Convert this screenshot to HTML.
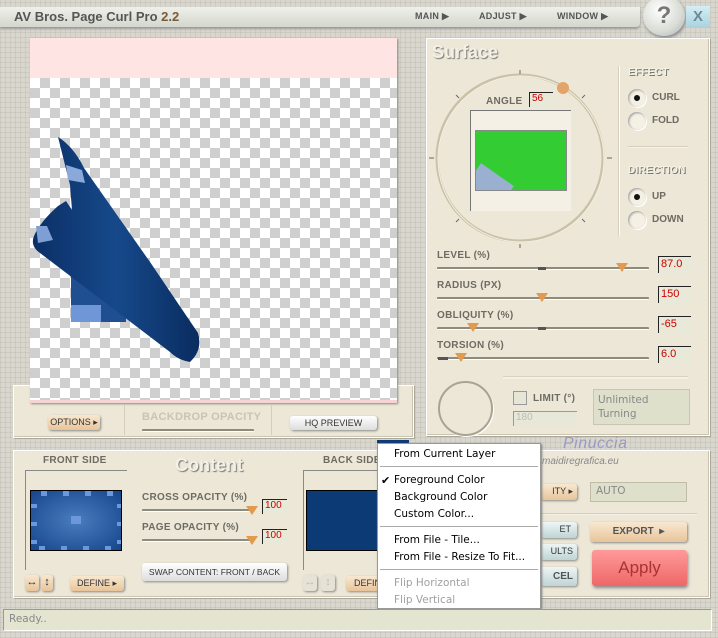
<!DOCTYPE html>
<html><head><style>
*{margin:0;padding:0;box-sizing:border-box}
body{width:718px;height:638px;position:relative;overflow:hidden;font-family:"Liberation Sans",sans-serif;
background-color:#d9d6cd;
background-image:repeating-linear-gradient(0deg,rgba(0,0,0,.05) 0 1px,transparent 1px 5px),repeating-linear-gradient(90deg,rgba(0,0,0,.05) 0 1px,transparent 1px 5px);}
.a{position:absolute}
.panel{position:absolute;background:#ece7d7;border:1px solid #fff;box-shadow:1px 1px 0 #aaa69a,inset -1px -1px 0 #c9c3b0}
.lbl{position:absolute;font-size:10px;font-weight:bold;color:#6d6b62;letter-spacing:.3px;white-space:nowrap}
.val{position:absolute;width:33px;height:17px;background:#e8e9d8;border-top:1px solid #222;border-left:1px solid #222;color:#c00;font-size:11px;padding:1px 2px}
.track{position:absolute;height:3px;background:#8d8a7e;border-bottom:1px solid #fff;border-radius:1px}
.thumb{position:absolute;width:0;height:0;border-left:6px solid transparent;border-right:6px solid transparent;border-top:9px solid #e39a4c}
.btn{position:absolute;font-size:9px;color:#333;text-align:center;border-radius:3px;box-shadow:1px 1px 2px #888;line-height:15px;white-space:nowrap}
.or{background:linear-gradient(#f8e8d0,#e8c49a)}
.wh{background:linear-gradient(#fff,#ddd)}
.bl{background:linear-gradient(#eef5f5,#bfd4d6)}
.radio{position:absolute;width:18px;height:18px;border-radius:50%;background:#f4f0e4;box-shadow:inset 1px 1px 2px #999,1px 1px 0 #fff}
.radio.on::after{content:"";position:absolute;left:6px;top:6px;width:6px;height:6px;border-radius:50%;background:#111}
.rt{position:absolute;font-size:10px;font-weight:bold;color:#6d6b62}
.mi{position:absolute;left:394px;font-family:"DejaVu Sans",sans-serif;font-size:10.5px;color:#000;white-space:nowrap}
.sep{position:absolute;left:380px;width:158px;height:2px;border-top:1px solid #aaa;border-bottom:1px solid #fff}
</style></head><body>

<div class="a" style="left:0;top:7px;width:640px;height:20px;background:linear-gradient(#eef0ea,#d4d7cd);border-radius:0 0 4px 0;box-shadow:0 2px 2px #999"></div>
<div class="a" style="left:14px;top:9px;font-size:13px;font-weight:bold;color:#555">AV Bros. Page Curl Pro <span style="color:#7a5a38">2.2</span></div>
<div class="a" style="left:415px;top:11px;font-size:9px;font-weight:bold;color:#555;letter-spacing:.3px">MAIN ▶</div>
<div class="a" style="left:479px;top:11px;font-size:9px;font-weight:bold;color:#555;letter-spacing:.3px">ADJUST ▶</div>
<div class="a" style="left:557px;top:11px;font-size:9px;font-weight:bold;color:#555;letter-spacing:.3px">WINDOW ▶</div>
<div class="a" style="left:643px;top:-4px;width:42px;height:40px;border-radius:50%;background:radial-gradient(circle at 40% 35%,#fff,#d8dcd4 60%,#aab);box-shadow:1px 2px 3px #888;text-align:center;font-size:24px;font-weight:bold;color:#777;line-height:40px">?</div>
<div class="a" style="left:686px;top:6px;width:24px;height:22px;background:linear-gradient(#d4eef4,#a9d2de);text-align:center;font-size:15px;font-weight:bold;color:#6a8a98;line-height:22px">X</div>

<div class="panel" style="left:13px;top:385px;width:401px;height:53px"></div>
<div class="a" style="left:30px;top:38px;width:367px;height:365px;border-bottom:3px solid #f6d4d4;
background-color:#fff;background-image:linear-gradient(45deg,#cfcfcf 25%,transparent 25%,transparent 75%,#cfcfcf 75%),linear-gradient(45deg,#cfcfcf 25%,transparent 25%,transparent 75%,#cfcfcf 75%);background-size:20px 20px;background-position:0 0,10px 10px;box-shadow:1px 1px 2px #888"></div>
<div class="a" style="left:30px;top:38px;width:367px;height:40px;background:#ffe4e4"></div>
<svg class="a" style="left:0;top:0" width="420" height="400">
<defs><linearGradient id="g" x1="0" y1="0" x2="1" y2="0"><stop offset="0" stop-color="#0b2f66"/><stop offset=".5" stop-color="#16498a"/><stop offset="1" stop-color="#0a2c60"/></linearGradient></defs>
<rect x="71" y="275" width="55" height="47" fill="#1f4f91"/>
<rect x="71" y="305" width="30" height="17" fill="#6f96d6"/>
<path d="M58,137 C68,143 78,155 84,168 L150,262 L198,333 Q203,350 190,362 Q178,360 170,352 L40,253 Q30,246 34,236 Q40,222 58,206 L66,201 L72,210 L70,185 Z" fill="url(#g)"/>
<path d="M66,165 L82,170 L85,183 L68,180 Z" fill="#8aa8d8"/>
<path d="M36,226 L47,226 L53,240 L38,243 Z" fill="#7e9fd4"/>
</svg>
<div class="btn or" style="left:48px;top:415px;width:52px;height:15px">OPTIONS ▸</div>
<div class="a" style="left:124px;top:405px;width:1px;height:30px;background:#d4ceba"></div>
<div class="lbl" style="left:142px;top:411px;color:#c9c4b4;font-size:11px">BACKDROP OPACITY</div>
<div class="track" style="left:142px;top:429px;width:112px"></div>
<div class="a" style="left:271px;top:405px;width:1px;height:30px;background:#d4ceba"></div>
<div class="btn wh" style="left:290px;top:416px;width:87px;height:14px;line-height:14px">HQ PREVIEW</div>

<div class="panel" style="left:426px;top:38px;width:284px;height:398px"></div>
<div class="a" style="left:432px;top:42px;font-size:18px;font-weight:bold;color:#f4f0e4;text-shadow:1px 1px 1px #777">Surface</div>
<svg class="a" style="left:426px;top:68px" width="200" height="184">
<circle cx="94" cy="90" r="83" fill="none" stroke="#c9c2a8" stroke-width="3"/>
<circle cx="95" cy="91" r="83" fill="none" stroke="#f4f0e2" stroke-width="1"/>
<g stroke="#666" stroke-width="1"><line x1="94" y1="2" x2="94" y2="6"/><line x1="3" y1="90" x2="8" y2="90"/><line x1="181" y1="90" x2="186" y2="90"/><line x1="30" y1="27" x2="33" y2="30"/><line x1="156" y1="30" x2="159" y2="27"/><line x1="30" y1="154" x2="33" y2="151"/><line x1="156" y1="151" x2="159" y2="154"/><line x1="94" y1="176" x2="94" y2="180"/></g>
<circle cx="137" cy="20" r="6" fill="#e2a468"/>
</svg>
<div class="lbl" style="left:486px;top:96px;font-size:10px">ANGLE</div>
<div class="val" style="left:529px;top:92px;width:24px;height:15px;font-size:10px;padding:0 2px">56</div>
<div class="a" style="left:470px;top:110px;width:101px;height:101px;background:#f4f0e6;border-left:1px solid #777;border-top:1px solid #777"></div>
<div class="a" style="left:475px;top:130px;width:92px;height:61px;background:#33cc33;border:1px solid #888;overflow:hidden"><div class="a" style="left:-10px;top:40px;width:40px;height:40px;background:#9ab0d0;transform:rotate(35deg)"></div></div>
<div class="a" style="left:618px;top:66px;width:1px;height:170px;background:#d4ceba;box-shadow:1px 0 #fff"></div>
<div class="lbl" style="left:628px;top:67px;color:#f6f2e0;text-shadow:1px 1px 0 #777">EFFECT</div>
<div class="radio on" style="left:628px;top:89px"></div><div class="rt" style="left:652px;top:92px">CURL</div>
<div class="radio" style="left:628px;top:112px"></div><div class="rt" style="left:652px;top:115px">FOLD</div>
<div class="a" style="left:628px;top:146px;width:60px;height:2px;background:#f6f2e4;border-top:1px solid #d4ceba"></div>
<div class="lbl" style="left:628px;top:165px;color:#f6f2e0;text-shadow:1px 1px 0 #777">DIRECTION</div>
<div class="radio on" style="left:628px;top:188px"></div><div class="rt" style="left:652px;top:191px">UP</div>
<div class="radio" style="left:628px;top:211px"></div><div class="rt" style="left:652px;top:214px">DOWN</div>

<div class="lbl" style="left:437px;top:250px">LEVEL (%)</div>
<div class="track" style="left:437px;top:267px;width:212px"></div><div class="a" style="left:538px;top:267px;width:8px;height:3px;background:#555"></div><div class="thumb" style="left:616px;top:263px"></div>
<div class="val" style="left:658px;top:256px">87.0</div>
<div class="lbl" style="left:437px;top:280px">RADIUS (PX)</div>
<div class="track" style="left:437px;top:297px;width:212px"></div><div class="thumb" style="left:536px;top:293px"></div>
<div class="val" style="left:658px;top:286px">150</div>
<div class="lbl" style="left:437px;top:310px">OBLIQUITY (%)</div>
<div class="track" style="left:437px;top:327px;width:212px"></div><div class="a" style="left:538px;top:327px;width:8px;height:3px;background:#555"></div><div class="thumb" style="left:467px;top:323px"></div>
<div class="val" style="left:658px;top:316px">-65</div>
<div class="lbl" style="left:437px;top:340px">TORSION (%)</div>
<div class="track" style="left:437px;top:357px;width:212px"></div><div class="a" style="left:438px;top:357px;width:10px;height:3px;background:#555"></div><div class="thumb" style="left:455px;top:353px"></div>
<div class="val" style="left:658px;top:346px">6.0</div>
<div class="a" style="left:503px;top:376px;width:185px;height:3px;background:#f4f0e4;border-top:1px solid #d8d2be"></div>
<div class="a" style="left:438px;top:381px;width:55px;height:55px;border-radius:50%;border:2px solid #a9a392;box-shadow:1px 1px 0 #fff"></div>
<div class="a" style="left:513px;top:391px;width:14px;height:14px;border:1px solid #999;background:#e6e6d6"></div>
<div class="lbl" style="left:533px;top:393px">LIMIT (°)</div>
<div class="a" style="left:513px;top:411px;width:64px;height:15px;border-top:1px solid #999;border-left:1px solid #999;background:#e8e8d8;font-size:10px;color:#bbb;padding-left:2px">180</div>
<div class="a" style="left:593px;top:389px;width:97px;height:36px;background:#dfe0cc;border:1px solid #c9c5b2;font-family:'DejaVu Sans',sans-serif;font-size:10.5px;color:#888;padding:3px 4px;line-height:14px">Unlimited<br>Turning</div>

<div class="a" style="left:563px;top:435px;font-size:16px;font-style:italic;color:#9a9ac4;letter-spacing:.5px">Pinuccia</div>

<div class="panel" style="left:13px;top:450px;width:697px;height:148px"></div>
<div class="lbl" style="left:43px;top:455px">FRONT SIDE</div>
<div class="a" style="left:25px;top:470px;width:102px;height:100px;border-left:1px solid #888;border-top:1px solid #888"></div>
<div class="a" style="left:30px;top:490px;width:92px;height:61px;border:1px solid #000;background:radial-gradient(#4a7cc0,#16458a);overflow:hidden">
<div class="a" style="left:0;top:0;width:92px;height:61px;background-image:repeating-linear-gradient(90deg,transparent 0 10px,#6c97dc 10px 16px,transparent 16px 22px);background-size:100% 5px;background-repeat:no-repeat"></div>
<div class="a" style="left:0;top:55px;width:92px;height:6px;background-image:repeating-linear-gradient(90deg,transparent 0 8px,#6c97dc 8px 14px,transparent 14px 22px)"></div>
<div class="a" style="left:0;top:0;width:6px;height:61px;background-image:repeating-linear-gradient(0deg,transparent 0 8px,#6c97dc 8px 12px,transparent 12px 18px)"></div>
<div class="a" style="left:86px;top:0;width:6px;height:61px;background-image:repeating-linear-gradient(0deg,transparent 0 8px,#6c97dc 8px 12px,transparent 12px 18px)"></div>
<div class="a" style="left:40px;top:25px;width:10px;height:8px;background:#6c97dc"></div>
</div>
<div class="btn or" style="left:25px;top:575px;width:14px;height:16px;font-size:11px">↔</div>
<div class="btn or" style="left:41px;top:575px;width:12px;height:16px;font-size:11px">↕</div>
<div class="btn or" style="left:70px;top:576px;width:54px;height:15px">DEFINE ▸</div>
<div class="a" style="left:175px;top:455px;font-size:18px;font-weight:bold;color:#f4f0e4;text-shadow:1px 1px 1px #777">Content</div>
<div class="lbl" style="left:142px;top:492px">CROSS OPACITY (%)</div>
<div class="track" style="left:142px;top:509px;width:110px"></div><div class="thumb" style="left:246px;top:506px"></div>
<div class="val" style="left:262px;top:499px;width:25px;height:15px;font-size:10px;padding:0 2px">100</div>
<div class="lbl" style="left:142px;top:522px">PAGE OPACITY (%)</div>
<div class="track" style="left:142px;top:539px;width:110px"></div><div class="thumb" style="left:246px;top:536px"></div>
<div class="val" style="left:262px;top:529px;width:25px;height:15px;font-size:10px;padding:0 2px">100</div>
<div class="btn wh" style="left:142px;top:563px;width:145px;height:18px;line-height:18px;font-size:8.5px">SWAP CONTENT: FRONT / BACK</div>
<div class="lbl" style="left:323px;top:455px">BACK SIDE</div>
<div class="a" style="left:303px;top:470px;width:80px;height:100px;border-left:1px solid #888;border-top:1px solid #888"></div>
<div class="a" style="left:306px;top:490px;width:76px;height:61px;background:#0c3a75;border:1px solid #000"></div>
<div class="btn" style="left:303px;top:575px;width:14px;height:16px;color:#bbb;background:#e6e2d4;font-size:11px">↔</div>
<div class="btn" style="left:321px;top:575px;width:14px;height:16px;color:#bbb;background:#e6e2d4;font-size:11px">↕</div>
<div class="btn or" style="left:346px;top:576px;width:40px;height:15px;text-align:left;padding-left:8px">DEFIN</div>

<div class="btn or" style="left:540px;top:484px;width:37px;height:16px;text-align:right;padding-right:4px">ITY ▸</div>
<div class="a" style="left:590px;top:482px;width:97px;height:20px;background:#dfe0cc;border:1px solid #c0bca8;font-family:'DejaVu Sans',sans-serif;font-size:10.5px;color:#888;padding:2px 5px">AUTO</div>
<div class="a" style="left:540px;top:513px;width:157px;height:2px;background:#f4f0e4;border-top:1px solid #d4ceba"></div>
<div class="btn bl" style="left:540px;top:522px;width:37px;height:16px;text-align:right;padding-right:6px">ET</div>
<div class="btn bl" style="left:540px;top:544px;width:37px;height:16px;text-align:right;padding-right:4px">ULTS</div>
<div class="btn bl" style="left:540px;top:567px;width:37px;height:19px;line-height:19px;font-size:10px;font-weight:bold;color:#555;text-align:right;padding-right:4px">CEL</div>
<div class="btn or" style="left:590px;top:522px;width:97px;height:20px;line-height:20px;font-size:10px;font-weight:bold;color:#555">EXPORT &nbsp;▸</div>
<div class="btn" style="left:592px;top:550px;width:95px;height:36px;line-height:36px;background:linear-gradient(#ff9a9a,#ee6767);font-size:17px;color:#a33;box-shadow:1px 2px 3px #888">Apply</div>

<div class="a" style="left:377px;top:440px;width:32px;height:4px;background:#0c3a75"></div>
<div class="a" style="left:377px;top:443px;width:164px;height:166px;background:#fff;border:1px solid #999;box-shadow:1px 1px 2px #777"></div>
<div class="mi" style="top:448px">From Current Layer</div>
<div class="sep" style="top:466px"></div>
<div class="a" style="left:381px;top:474px;font-size:11px">✔</div>
<div class="mi" style="top:474px">Foreground Color</div>
<div class="mi" style="top:491px">Background Color</div>
<div class="mi" style="top:508px">Custom Color...</div>
<div class="sep" style="top:526px"></div>
<div class="mi" style="top:534px">From File - Tile...</div>
<div class="mi" style="top:551px">From File - Resize To Fit...</div>
<div class="sep" style="top:569px"></div>
<div class="mi" style="top:577px;color:#a0a0a0">Flip Horizontal</div>
<div class="mi" style="top:594px;color:#a0a0a0">Flip Vertical</div>
<div class="a" style="left:542px;top:456px;font-size:10px;font-style:italic;color:#888">maidiregrafica.eu</div>

<div class="a" style="left:3px;top:609px;width:709px;height:22px;background:#e4e5d0;border:1px solid #999;border-right-color:#fff;border-bottom-color:#fff;font-family:'DejaVu Sans',sans-serif;font-size:10.5px;color:#888;padding:3px 5px">Ready..</div>
</body></html>
